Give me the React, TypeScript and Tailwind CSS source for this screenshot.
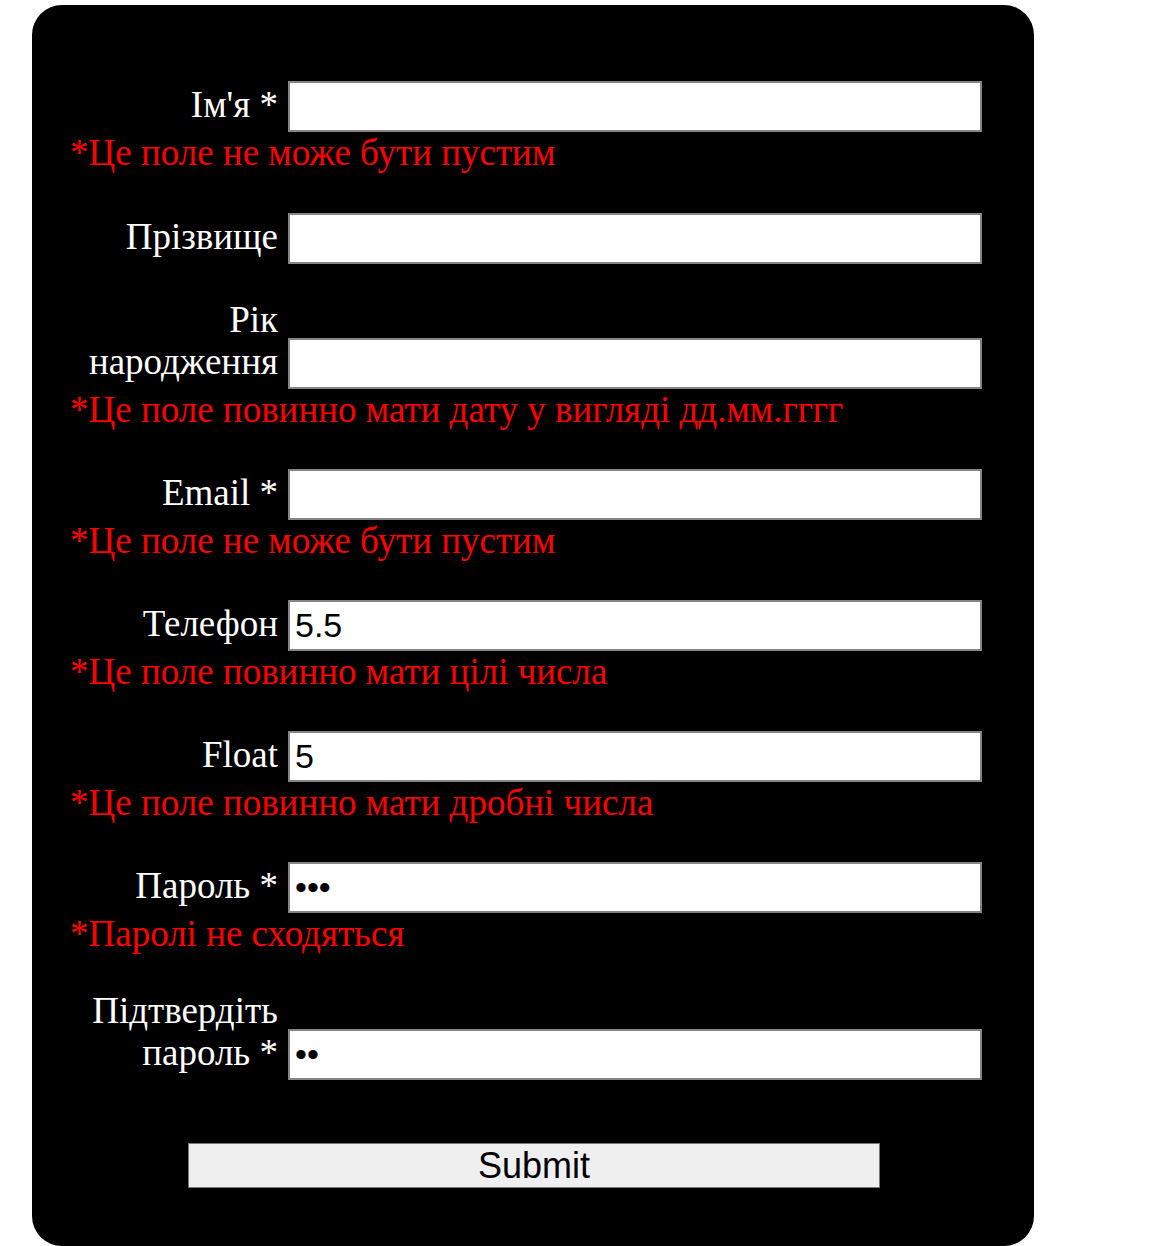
import React from "react";

type FieldProps = {
  label: React.ReactNode;
  value?: string;
  type?: string;
  error?: string;
  className: string;
};

function Field({ label, value = "", type = "text", error, className }: FieldProps) {
  return (
    <div className={className}>
      <div className="flex items-end">
        <div className="w-[208px] shrink-0 text-right text-[37px] leading-[42px] mb-[6px] text-white">
          {label}
        </div>
        <input
          type={type}
          defaultValue={value}
          className="ml-[10px] w-[694px] h-[51px] bg-white border-2 border-[#858585] px-[5px] text-[34px] text-black font-['Liberation_Sans',Arial,sans-serif] outline-none"
        />
      </div>
      {error && (
        <div className="text-[37px] leading-[42px] text-[#ff0000] whitespace-nowrap">{error}</div>
      )}
    </div>
  );
}

export default function App() {
  return (
    <div className="min-h-[1246px] bg-white overflow-hidden font-['Liberation_Serif','Times_New_Roman',serif]">
      <div className="ml-[32px] mt-[5px] w-[1002px] h-[1241px] bg-black rounded-[30px] pl-[38px] pt-[76px]">
        <Field className="" label="Ім'я *" error="*Це поле не може бути пустим" />
        <Field className="mt-[39px]" label="Прізвище" />
        <Field
          className="mt-[35px]"
          label={
            <>
              Рік
              <br />
              народження
            </>
          }
          error="*Це поле повинно мати дату у вигляді дд.мм.гггг"
        />
        <Field className="mt-[38px]" label="Email *" error="*Це поле не може бути пустим" />
        <Field className="mt-[38px]" label="Телефон" value="5.5" error="*Це поле повинно мати цілі числа" />
        <Field className="mt-[38px]" label="Float" value="5" error="*Це поле повинно мати дробні числа" />
        <Field className="mt-[38px]" label="Пароль *" type="password" value="abc" error="*Паролі не сходяться" />
        <Field
          className="mt-[35px]"
          label={
            <>
              Підтвердіть
              <br />
              пароль *
            </>
          }
          type="password"
          value="ab"
        />
        <button
          type="button"
          className="block mt-[63px] ml-[118px] w-[692px] h-[45px] bg-[#efefef] border border-[#767676] text-[36px] leading-none text-black font-['Liberation_Sans',Arial,sans-serif]"
        >
          Submit
        </button>
      </div>
    </div>
  );
}
